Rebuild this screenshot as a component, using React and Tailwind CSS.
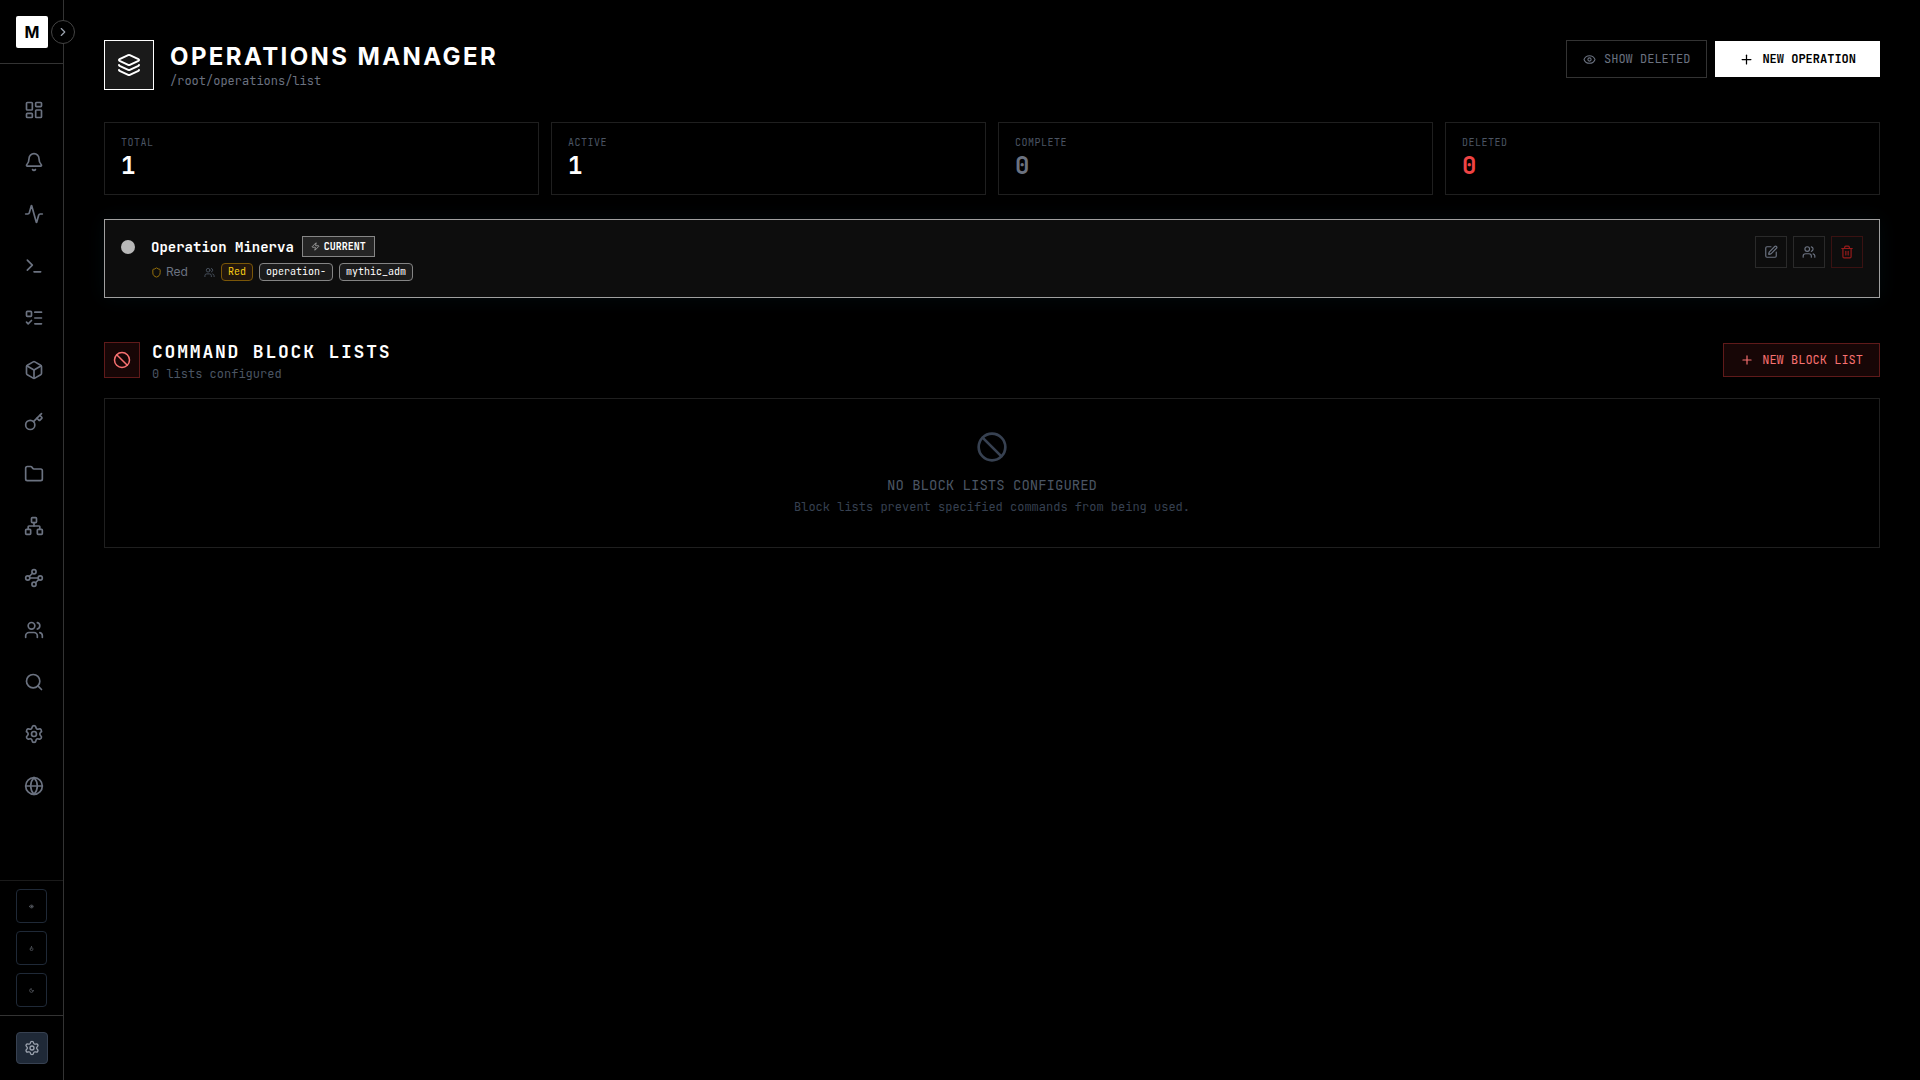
import { useState } from 'react';
import {
  Activity,
  Ban,
  Bell,
  Box,
  ChevronRight,
  Eye,
  Flame,
  Folder,
  Globe,
  Key,
  Layers,
  LayoutDashboard,
  ListTodo,
  Moon,
  Network,
  Plus,
  Search,
  Settings,
  Shield,
  SquarePen,
  Terminal,
  Trash2,
  Users,
  Zap,
} from 'lucide-react';

const GraphIcon = ({ size }) => (
  <svg
    width={size}
    height={size}
    viewBox="0 0 24 24"
    fill="none"
    stroke="currentColor"
    strokeWidth={2}
    strokeLinecap="round"
    strokeLinejoin="round"
  >
    <circle cx="12" cy="4.5" r="2.5" />
    <path d="m10.2 6.3-3.9 3.9" />
    <circle cx="4.5" cy="12" r="2.5" />
    <path d="M7 12h10" />
    <circle cx="19.5" cy="12" r="2.5" />
    <path d="m13.8 17.7 3.9-3.9" />
    <circle cx="12" cy="19.5" r="2.5" />
  </svg>
);

const navItems = [
  { label: 'Dashboard', icon: LayoutDashboard },
  { label: 'Notifications', icon: Bell },
  { label: 'Activity', icon: Activity },
  { label: 'Terminal', icon: Terminal },
  { label: 'Tasks', icon: ListTodo },
  { label: 'Payloads', icon: Box },
  { label: 'Credentials', icon: Key },
  { label: 'Files', icon: Folder },
  { label: 'Network', icon: Network },
  { label: 'Graph', icon: GraphIcon },
  { label: 'Users', icon: Users },
  { label: 'Search', icon: Search },
  { label: 'Settings', icon: Settings },
  { label: 'Browser', icon: Globe },
];

const quickItems = [
  { label: 'Visibility', icon: Eye },
  { label: 'Effects', icon: Flame },
  { label: 'Theme', icon: Moon },
];

const stats = [
  { label: 'TOTAL', value: 1, color: 'text-white' },
  { label: 'ACTIVE', value: 1, color: 'text-white' },
  { label: 'COMPLETE', value: 0, color: 'text-[#6b7280]' },
  { label: 'DELETED', value: 0, color: 'text-[#ef4444]' },
];

const members = [
  { name: 'Red', style: 'border-[#7a5608] bg-[#22160c] text-[#facc15]' },
  { name: 'operation-', style: 'border-[#848484] bg-[#1b1b1b] text-white' },
  { name: 'mythic_adm', style: 'border-[#848484] bg-[#1b1b1b] text-white' },
];

const Sidebar = ({ onToggle }) => (
  <aside className="sticky top-0 z-10 flex h-screen w-16 shrink-0 flex-col border-r border-[#333333] bg-black">
    <div className="relative flex h-16 shrink-0 items-center border-b border-[#333333] px-4">
      <div className="flex size-8 shrink-0 items-center justify-center rounded-xs bg-white text-base font-bold text-black">
        M
      </div>
      <button
        type="button"
        onClick={onToggle}
        aria-label="Expand sidebar"
        className="absolute top-5 -right-3 flex size-6 items-center justify-center rounded-full border border-[#444444] bg-black text-[#9ca3af]"
      >
        <ChevronRight size={14} />
      </button>
    </div>

    <nav className="flex min-h-0 flex-1 flex-col gap-2 overflow-hidden pt-6 pl-3">
      {navItems.map(({ label, icon: Icon }) => (
        <a key={label} href="#" aria-label={label} className="flex p-3 text-[#6b7280]">
          <Icon size={20} />
        </a>
      ))}
    </nav>

    <div className="flex flex-col gap-2 border-t border-[#1a1a1a] px-4 py-2">
      {quickItems.map(({ label, icon: Icon }) => (
        <button
          key={label}
          type="button"
          aria-label={label}
          className="flex h-[34px] items-center justify-center rounded-sm border border-[#1f2937] text-[#9ca3af]"
        >
          <Icon size={5} />
        </button>
      ))}
    </div>

    <div className="flex h-[65px] shrink-0 items-center border-t border-[#333333] px-4">
      <button
        type="button"
        aria-label="Preferences"
        className="flex size-8 shrink-0 items-center justify-center rounded-sm border border-[#374151] bg-[#1f2937] text-[#9ca3af]"
      >
        <Settings size={16} />
      </button>
    </div>
  </aside>
);

const StatCard = ({ label, value, color }) => (
  <div className="border border-[#1f1f1f] px-4 py-3">
    <div className="text-[10px] leading-[15px] tracking-wider text-[#4b5563]">{label}</div>
    <div className={`text-2xl font-bold ${color}`}>{value}</div>
  </div>
);

const OperationCard = () => (
  <section className="mt-6 flex items-start justify-between border border-[#a0a0a0] bg-[#0d0d0d] p-4 shadow-[0_0_20px_rgba(0,200,255,0.05)]">
    <div className="flex items-start gap-4">
      <span className="mt-1 size-3.5 rounded-full bg-[#b8b8b8]" />
      <div>
        <div className="flex items-center gap-2">
          <h2 className="text-sm leading-5 font-bold text-white">Operation Minerva</h2>
          <span className="flex items-center gap-1 border border-[#868686] bg-[#252525] px-2 py-0.5 text-[10px] leading-[15px] font-bold text-white">
            <Zap size={9} className="text-[#b8b8b8]" />
            CURRENT
          </span>
        </div>
        <div className="mt-1.5 flex items-center gap-4">
          <span className="flex items-center gap-1 font-['Inter',sans-serif] text-xs text-[#6b7280]">
            <Shield size={11} className="text-[#a37b0c]" />
            Red
          </span>
          <div className="flex items-center gap-1.5">
            <Users size={11} className="text-[#4b5563]" />
            {members.map((member) => (
              <span
                key={member.name}
                className={`rounded-sm border px-1.5 text-[10px] leading-4 ${member.style}`}
              >
                {member.name}
              </span>
            ))}
          </div>
        </div>
      </div>
    </div>
    <div className="flex gap-1.5">
      <button
        type="button"
        aria-label="Edit operation"
        className="flex size-8 items-center justify-center border border-[#2a2a2a] text-[#6b7280]"
      >
        <SquarePen size={14} />
      </button>
      <button
        type="button"
        aria-label="Manage members"
        className="flex size-8 items-center justify-center border border-[#2a2a2a] text-[#6b7280]"
      >
        <Users size={14} />
      </button>
      <button
        type="button"
        aria-label="Delete operation"
        className="flex size-8 items-center justify-center border border-[#3a1212] text-[#991b1b]"
      >
        <Trash2 size={14} />
      </button>
    </div>
  </section>
);

const BlockLists = () => (
  <section className="mt-10">
    <div className="flex items-center justify-between">
      <div className="flex items-center gap-3">
        <div className="flex size-9 items-center justify-center border border-[#5f1a1a] bg-[#170606] text-[#f87171]">
          <Ban size={18} />
        </div>
        <div>
          <h2 className="text-lg leading-7 font-bold tracking-widest text-white">COMMAND BLOCK LISTS</h2>
          <p className="text-xs text-[#4b5563]">0 lists configured</p>
        </div>
      </div>
      <button
        type="button"
        className="flex items-center gap-2 border border-[#5f1a1a] bg-[#170606] px-4 py-2 text-xs text-[#f87171]"
      >
        <Plus size={14} />
        NEW BLOCK LIST
      </button>
    </div>
    <div className="mt-4 flex flex-col items-center border border-[#1f1f1f] p-8">
      <Ban size={32} className="text-[#374151]" />
      <p className="mt-3 text-sm text-[#4b5563]">NO BLOCK LISTS CONFIGURED</p>
      <p className="mt-1 text-xs text-[#374151]">Block lists prevent specified commands from being used.</p>
    </div>
  </section>
);

const App = () => {
  const [showDeleted, setShowDeleted] = useState(false);
  const [, setExpanded] = useState(false);

  return (
    <div className="flex min-h-screen bg-black font-['Inter',sans-serif]">
      <Sidebar onToggle={() => setExpanded((value) => !value)} />
      <main className="min-w-0 flex-1 p-10 font-['JetBrains_Mono','DejaVu_Sans_Mono',monospace]">
        <header className="flex items-start justify-between">
          <div className="flex items-center gap-4">
            <div className="flex size-[50px] items-center justify-center border border-white bg-[#1a1a1a] text-white">
              <Layers size={24} />
            </div>
            <div>
              <h1 className="font-['Inter',sans-serif] text-2xl font-bold tracking-widest text-white">
                OPERATIONS MANAGER
              </h1>
              <p className="text-xs text-[#6b7280]">/root/operations/list</p>
            </div>
          </div>
          <div className="flex items-center gap-2">
            <button
              type="button"
              onClick={() => setShowDeleted(!showDeleted)}
              className="flex items-center gap-2 border border-[#333333] px-4 py-2.5 text-xs text-[#6b7280]"
            >
              <Eye size={13} />
              SHOW DELETED
            </button>
            <button
              type="button"
              className="flex items-center gap-2 bg-white px-6 py-2.5 text-xs font-bold text-black"
            >
              <Plus size={15} />
              NEW OPERATION
            </button>
          </div>
        </header>

        <div className="mt-8 grid grid-cols-4 gap-3">
          {stats.map((stat) => (
            <StatCard key={stat.label} {...stat} />
          ))}
        </div>

        <OperationCard />
        <BlockLists />
      </main>
    </div>
  );
};

export default App;
